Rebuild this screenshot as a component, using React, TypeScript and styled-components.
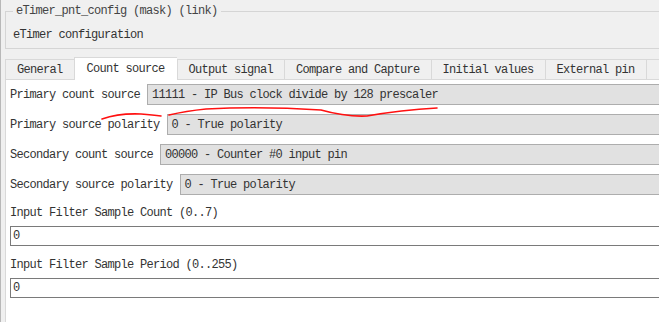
import React from 'react';
import styled, { createGlobalStyle } from 'styled-components';

const GlobalStyle = createGlobalStyle`
  html, body {
    margin: 0;
    padding: 0;
    background: #f0f0f0;
    overflow: hidden;
  }
`;

const Page = styled.div`
  position: relative;
  width: 659px;
  height: 322px;
  overflow: hidden;
  background: #f0f0f0;
  border-left: 1px solid #b8b8b8;
  box-sizing: border-box;
  font-family: 'Liberation Mono', 'DejaVu Sans Mono', monospace;
  font-size: 12px;
  letter-spacing: -0.7px;
  line-height: 16px;
  color: #333;
`;

const Inner = styled.div`
  width: 700px;
  padding-left: 4px;
  display: flex;
  flex-direction: column;
`;

const Group = styled.fieldset`
  margin: 3px 0 0 0;
  padding: 8px 6px 5px 7px;
  border: 1px solid #d5d5d5;
  min-width: 0;
`;

const GroupTitle = styled.legend`
  padding: 0 3px;
  line-height: 16px;
  color: #444;
`;

const Description = styled.div`
  color: #333;
`;

const TabBar = styled.div`
  display: flex;
  align-items: flex-end;
  height: 23px;
  margin-top: 8px;
`;

const Tab = styled.div<{ $active?: boolean }>`
  display: flex;
  align-items: center;
  box-sizing: border-box;
  height: ${p => (p.$active ? 23 : 21)}px;
  min-width: 12px;
  padding: ${p => (p.$active ? '0 12px 1px' : '0 11px')};
  background: ${p => (p.$active ? '#ffffff' : '#f0f0f0')};
  border: 1px solid #d9d9d9;
  border-right: none;
  border-bottom: ${p => (p.$active ? 'none' : '1px solid #d9d9d9')};
  white-space: nowrap;
  color: #333;
  position: relative;
  z-index: ${p => (p.$active ? 1 : 0)};
`;

const Panel = styled.div`
  background: #ffffff;
  border-left: 1px solid #d9d9d9;
  border-top: 1px solid #d9d9d9;
  margin-top: -1px;
  padding: 4px 0 40px 4px;
  display: flex;
  flex-direction: column;
`;

const ComboRow = styled.div`
  display: flex;
  align-items: center;
  gap: 7px;
  height: 21px;
  margin-bottom: 9px;
`;

const Label = styled.span`
  white-space: nowrap;
`;

const Combo = styled.div`
  flex: 1;
  box-sizing: border-box;
  height: 21px;
  display: flex;
  align-items: center;
  padding-left: 4px;
  background: #e1e1e1;
  border: 1px solid #adadad;
  white-space: nowrap;
`;

const FieldLabel = styled.div`
  margin-top: 1px;
  height: 16px;
`;

const NumberInput = styled.div`
  box-sizing: border-box;
  height: 20px;
  margin: 5px 0 10px 0;
  display: flex;
  align-items: center;
  padding-left: 2px;
  background: #ffffff;
  border: 1px solid #7a7a7a;
`;

const Annotation = styled.svg`
  position: absolute;
  left: 0;
  top: 0;
  pointer-events: none;
`;

// last entry is the tab that runs off the right edge
const tabs = ['General', 'Count source', 'Output signal', 'Compare and Capture', 'Initial values', 'External pin', ''];

const combos = [
  { label: 'Primary count source', value: '11111 - IP Bus clock divide by 128 prescaler' },
  { label: 'Primary source polarity', value: '0 - True polarity' },
  { label: 'Secondary count source', value: '00000 - Counter #0 input pin' },
  { label: 'Secondary source polarity', value: '0 - True polarity' },
];

const inputs = [
  { label: 'Input Filter Sample Count (0..7)', value: '0' },
  { label: 'Input Filter Sample Period (0..255)', value: '0' },
];

const App: React.FC = () => {
  return (
    <Page>
      <GlobalStyle />
      <Inner>
        <Group>
          <GroupTitle>eTimer_pnt_config (mask) (link)</GroupTitle>
          <Description>eTimer configuration</Description>
        </Group>

        <TabBar>
          {tabs.map((t, i) => (
            <Tab key={i} $active={t === 'Count source'}>{t}</Tab>
          ))}
        </TabBar>

        <Panel>
          {combos.map(c => (
            <ComboRow key={c.label}>
              <Label>{c.label}</Label>
              <Combo>{c.value}</Combo>
            </ComboRow>
          ))}
          {inputs.map(i => (
            <React.Fragment key={i.label}>
              <FieldLabel>{i.label}</FieldLabel>
              <NumberInput>{i.value}</NumberInput>
            </React.Fragment>
          ))}
        </Panel>
      </Inner>

      {/* red hand-drawn underline */}
      <Annotation width="659" height="322">
        <path
          d="M101,119 Q118,113 140,114 Q152,115 160,116 M168,115 Q185,111 205,109 Q260,106 320,110 Q345,117 366,116 Q400,110 436,108"
          fill="none"
          stroke="#ff1010"
          strokeWidth="1.6"
          strokeLinecap="round"
        />
      </Annotation>
    </Page>
  );
};

export default App;
